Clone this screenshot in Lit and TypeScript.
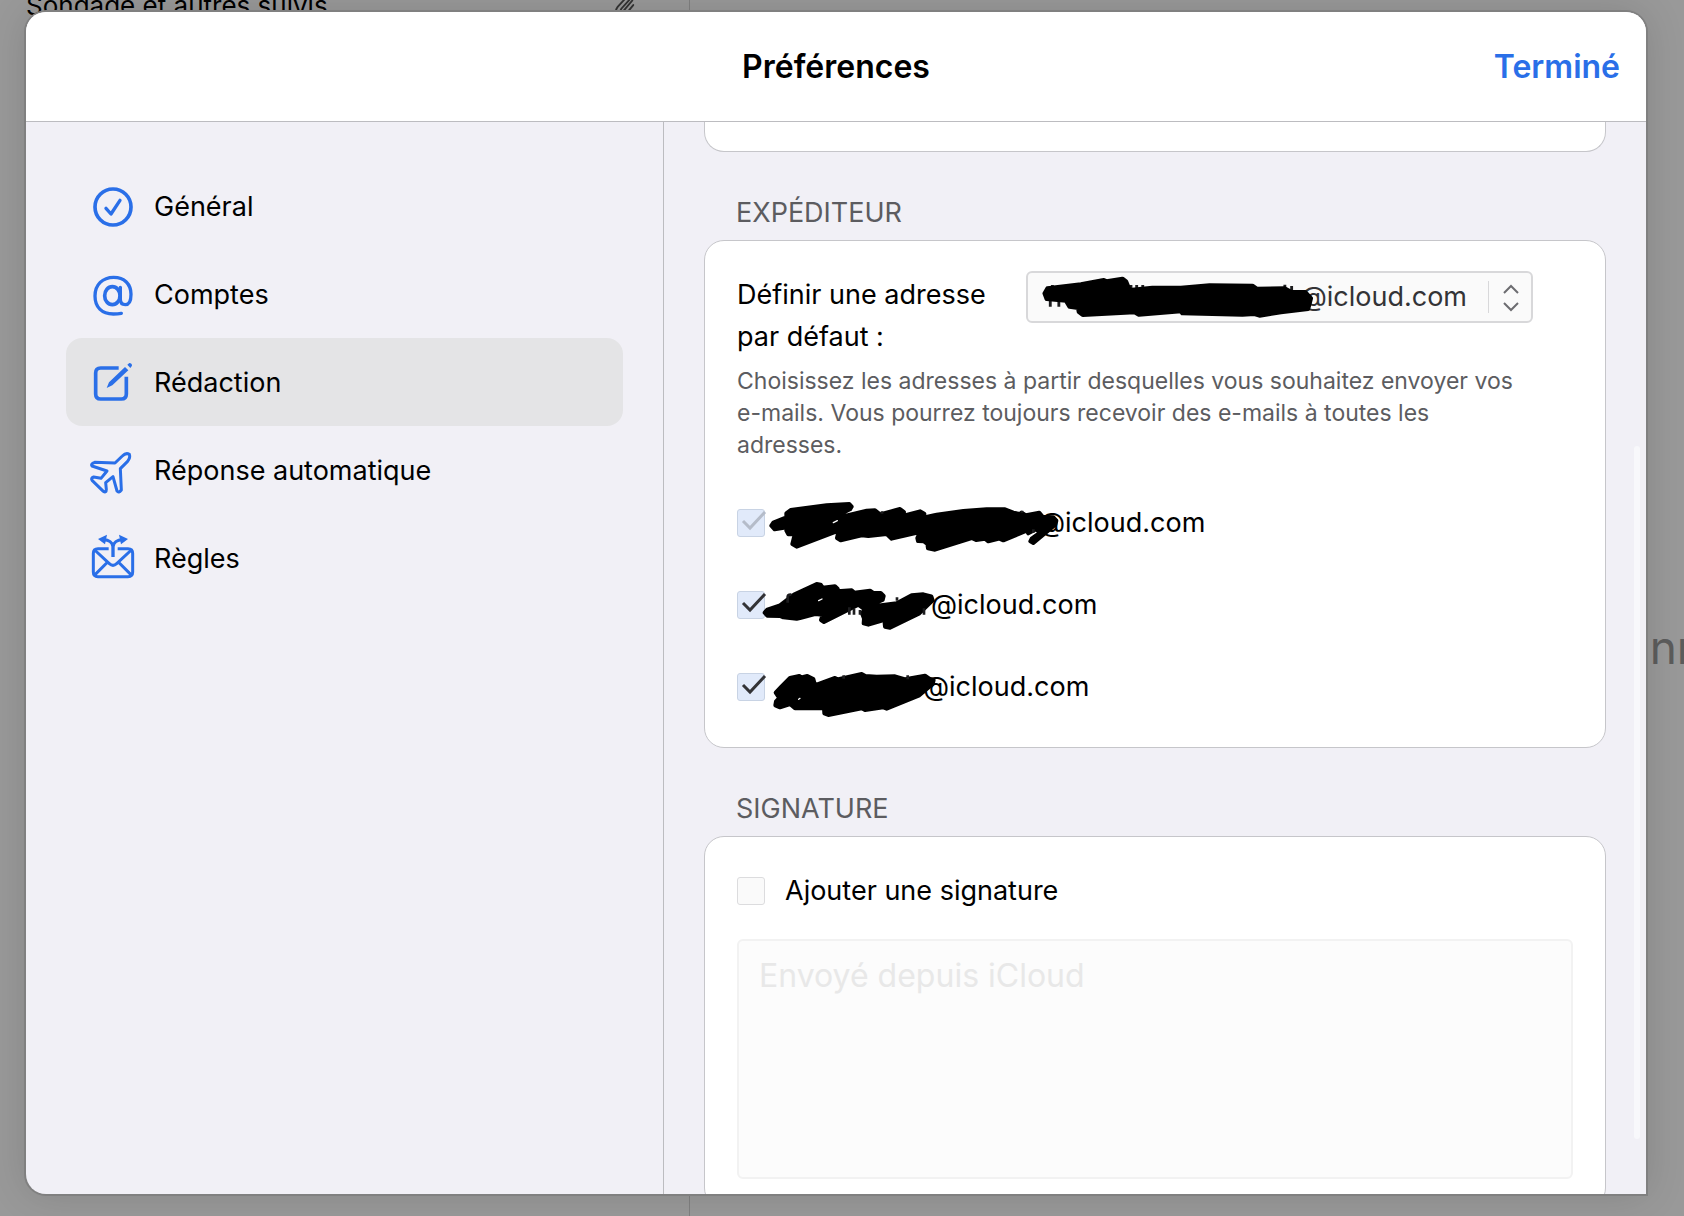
import { LitElement, html, css, svg, nothing } from "lit";
import { customElement, property, state } from "lit/decorators.js";
import { classMap } from "lit/directives/class-map.js";

type Section = { id: string; label: string; box: string; icon: unknown };

const SECTIONS: Section[] = [
  {
    id: "general",
    label: "Général",
    box: "90 72 132 132",
    icon: svg`<circle cx="159" cy="141" r="54" stroke-width="11"/>
      <path d="M138 145 L153 162 L180 121" stroke-width="10"/>`,
  },
  {
    id: "comptes",
    label: "Comptes",
    box: "90 336 132 132",
    icon: svg`<path stroke-width="10" d="M184 460 Q173 462 160 462 C125 462 105 441 105 408 C105 374 128 352 161 352 C193 352 213 372 213 403 C213 423 207 434 196 434 C186 434 181 428 181 418 L181 382"/>
      <ellipse cx="157" cy="407" rx="23" ry="27" stroke-width="11"/>`,
  },
  {
    id: "redaction",
    label: "Rédaction",
    box: "90 0 132 132",
    icon: svg`<path stroke-width="11" stroke-linecap="butt" d="M176 24 H122 Q107 24 107 39 V102 Q107 117 122 117 H184 Q199 117 199 102 V50"/>
      <path class="solid" d="M140 84 L147 67 L195 21 L205 31 L157 76 Z M202 14 L208 9 Q216 9 216 17 L211 24 Z"/>`,
  },
  {
    id: "reponse",
    label: "Réponse automatique",
    box: "90 264 132 132",
    icon: svg`<path stroke-width="9" d="M165 309 L104 307 Q91 312 96 318 L141 333 L123 355 L101 351 Q91 355 97 362 L130 394 Q139 400 139 388 L137 368 L159 350 L171 393 Q176 400 184 390 L181 326 L202 305 Q212 294 208 283 Q198 277 187 288 Z"/>`,
  },
  {
    id: "regles",
    label: "Règles",
    box: "90 528 132 132",
    icon: svg`<path stroke-width="9" stroke-linecap="butt" d="M146 566 H114 Q100 566 100 580 V636 Q100 650 114 650 H204 Q218 650 218 636 V580 Q218 566 204 566 H173"/>
      <path stroke-width="9" stroke-linecap="butt" d="M104 570 L148 611 Q159 621 170 611 L214 570 M103 646 L143 606 M215 646 L175 606"/>
      <path stroke-width="10" stroke-linecap="butt" d="M159 591 V560 C158 548 146 540 131 539 M159 560 C160 548 172 540 187 539"/>
      <path class="solid" d="M114 537 L141 524 L135 553 Z M204 537 L177 524 L183 553 Z"/>`,
  },
];

type Address = { id: string; domain: string; checked: boolean; locked: boolean; width: number; top: number; ink: unknown };

const ADDRESSES: Address[] = [
  {
    id: "adresse-1",
    domain: "@icloud.com",
    checked: true,
    locked: true,
    width: 254,
    top: 87,
    ink: svg`<path class="mass" d="M154 137 L160 128 L199 112 L199 100 L212 90 L320 76 L388 72 L395 80 L390 88 L362 102 L356 112 L440 92 L465 91 L480 103 L540 87 L552 96 L548 108 L600 94 L613 101 L612 112 L650 104 L730 93 L800 88 L855 88 L880 98 L900 102 L905 98 L918 106 L958 98 L968 110 L1000 112 L1009 122 L1006 134 L940 189 L931 184 L935 176 L960 158 L948 148 L925 160 L920 152 L850 181 L838 176 L805 184 L795 176 L768 180 L755 174 L645 209 L624 205 L622 192 L612 184 L594 183 L592 174 L600 156 L515 176 L500 162 L445 168 L425 166 L362 181 L351 174 L356 152 L230 200 L217 192 L222 172 L238 162 L205 163 L199 152 L210 140 L164 148 Z"/>
      <path class="trace" d="M486 94 V101 M906 92 V98 M940 148 V158"/>
      <path class="gap" d="M340 128 L352 122"/>`,
  },
  {
    id: "adresse-2",
    domain: "@icloud.com",
    checked: true,
    locked: false,
    width: 146,
    top: 333,
    ink: svg`<path class="mass" d="M134 398 L142 389 L180 376 L222 344 L290 312 L302 314 L308 323 L345 319 L353 326 L352 334 L395 331 L403 338 L450 332 L460 339 L482 339 L491 348 L488 360 L468 368 L466 378 L530 370 L575 346 L610 343 L634 349 L638 361 L598 400 L510 443 L495 440 L494 430 L512 414 L445 434 L431 430 L432 416 L426 400 L434 388 L415 374 L312 426 L303 420 L308 404 L285 402 L240 414 L230 416 L190 412 L180 408 L142 407 Z"/>
      <path class="trace" d="M203 368 V350 Q204 343 214 344 M388 382 V404 M402 386 V404 M420 390 V404 M531 352 V362 M612 385 V404"/>
      <path class="gap" d="M296 362 L306 357"/>`,
  },
  {
    id: "adresse-3",
    domain: "@icloud.com",
    checked: true,
    locked: false,
    width: 138,
    top: 579,
    ink: svg`<path class="mass" d="M167 638 L184 620 L210 594 L238 588 L244 592 L262 588 L280 597 L284 612 L290 614 L345 594 L352 598 L425 582 L436 588 L470 590 L525 589 L556 598 L615 587 L628 596 L641 600 L638 612 L598 646 L500 686 L490 682 L435 690 L425 685 L325 705 L313 700 L312 685 L225 685 L210 672 L180 682 L166 676 L168 664 L178 654 Z"/>
      <path class="trace" d="M371 586 V596 M563 586 V598"/>
      <path class="gap" d="M236 658 L240 655"/>`,
  },
];

@customElement("redacted-ink")
export class RedactedInk extends LitElement {
  @property() box = "0 0 100 100";
  @property({ attribute: false }) ink: unknown = nothing;

  static styles = css`
    :host {
      display: block;
      height: 100%;
      pointer-events: none;
    }
    svg {
      display: block;
      width: 100%;
      height: 100%;
      overflow: visible;
      fill: none;
      stroke-linecap: round;
      stroke-linejoin: round;
    }
    .mass {
      fill: #000;
      stroke: #000;
      stroke-width: 12;
    }
    .trace {
      stroke: #1c1c1e;
      stroke-width: 8;
      stroke-linecap: butt;
    }
    .gap {
      stroke: #fff;
      stroke-width: 4;
    }
  `;

  render() {
    return html`<svg viewBox=${this.box} preserveAspectRatio="none" aria-hidden="true">${this.ink}</svg>`;
  }
}

@customElement("check-box")
export class CheckBox extends LitElement {
  @property() label = "";
  @property({ type: Boolean }) checked = false;
  @property({ type: Boolean }) locked = false;
  @property({ attribute: false }) ink?: unknown;
  @property({ type: Number }) inkWidth = 0;
  @property({ type: Number }) inkTop = 0;

  static styles = css`
    :host {
      display: block;
    }
    .row {
      display: flex;
      align-items: center;
      gap: 20px;
      height: 28px;
      font-size: 27px;
      line-height: 28px;
      white-space: nowrap;
    }
    .tick {
      position: relative;
      flex: none;
      width: 28px;
      height: 28px;
    }
    input {
      appearance: none;
      display: block;
      box-sizing: border-box;
      width: 28px;
      height: 28px;
      margin: 0;
      border: 1px solid #dcdcde;
      border-radius: 3px;
      background: #fafafa;
    }
    input:checked {
      border-color: #c8d3e4;
      background: #e1eafa;
    }
    .mark {
      position: absolute;
      inset: 0;
      overflow: visible;
      fill: none;
      stroke: #333336;
      stroke-width: 3;
      pointer-events: none;
    }
    input:disabled + .mark {
      stroke: #b5bcc9;
    }
    .text {
      display: flex;
    }
    .ink {
      position: relative;
      z-index: 1;
      height: 28px;
    }
  `;

  private toggle(e: Event) {
    this.checked = (e.target as HTMLInputElement).checked;
  }

  render() {
    return html`<label class="row">
      <span class="tick">
        <input type="checkbox" .checked=${this.checked} ?disabled=${this.locked} @change=${this.toggle} />
        ${this.checked
          ? html`<svg class="mark" viewBox="0 0 28 28" aria-hidden="true"><path d="M6 12 L13 19 L28 3" /></svg>`
          : nothing}
      </span>
      <span class="text">
        ${this.ink
          ? html`<span class="ink" style="width:${this.inkWidth}px"
              ><redacted-ink .box=${`195 ${this.inkTop} ${this.inkWidth * 3} 84`} .ink=${this.ink}></redacted-ink
            ></span>`
          : nothing}
        <span>${this.label}</span>
      </span>
    </label>`;
  }
}

@customElement("app-root")
export class AppRoot extends LitElement {
  @state() private current = "redaction";

  static styles = css`
    :host {
      display: block;
      height: 100vh;
      font-family: Inter, "Liberation Sans", sans-serif;
      color: #000;
    }
    * {
      box-sizing: border-box;
    }
    .page {
      position: relative;
      height: 100%;
      overflow: hidden;
      padding: 12px 38px 22px 26px;
      background: #999;
    }
    .behind {
      position: absolute;
      inset: 0;
    }
    .mail-list {
      position: absolute;
      top: 0;
      bottom: 0;
      left: 0;
      width: 690px;
      border-right: 1px solid #808080;
    }
    .subject {
      position: absolute;
      top: -10px;
      left: 26px;
      font-size: 26px;
      line-height: 32px;
      white-space: nowrap;
    }
    .clip {
      position: absolute;
      top: -6px;
      left: 614px;
      width: 22px;
      height: 24px;
      fill: none;
      stroke: #333;
      stroke-width: 2;
      stroke-linecap: round;
    }
    .empty {
      position: absolute;
      top: 619px;
      right: -20px;
      color: #5c5c5c;
      font-size: 46px;
      line-height: 56px;
    }
    .dialog {
      position: relative;
      display: flex;
      flex-direction: column;
      height: 100%;
      border-radius: 20px 20px 0 20px;
      background: #f1f0f6;
      box-shadow: 0 0 0 2px #808080, 0 0 40px rgba(0, 0, 0, 0.14);
    }
    .header {
      display: grid;
      grid-template-columns: 1fr auto 1fr;
      align-items: center;
      flex: none;
      height: 110px;
      padding: 0 26px;
      border-bottom: 1px solid #bcbcc0;
      border-radius: 20px 20px 0 0;
      background: #fff;
    }
    .title {
      grid-column: 2;
      margin: 0;
      font-size: 32px;
      font-weight: 600;
      line-height: 40px;
    }
    .done {
      justify-self: end;
      padding: 0;
      border: 0;
      background: none;
      color: #2a6fe8;
      font: 600 32px/40px Inter, "Liberation Sans", sans-serif;
    }
    .body {
      display: grid;
      grid-template-columns: 638px minmax(0, 1fr);
      flex: 1;
      min-height: 0;
    }
    .sidebar {
      padding: 40px;
      border-right: 1px solid #bcbcc0;
    }
    .section {
      display: flex;
      align-items: center;
      gap: 20px;
      width: 100%;
      height: 88px;
      padding: 0 24px;
      border: 0;
      border-radius: 16px;
      background: none;
      color: #000;
      font: 27px/36px Inter, "Liberation Sans", sans-serif;
      text-align: left;
    }
    .section.current {
      background: #e4e4e6;
    }
    .name {
      padding-top: 2px;
    }
    .icon {
      flex: none;
      width: 44px;
      height: 44px;
      overflow: visible;
      fill: none;
      stroke: #2a6fe8;
      stroke-linecap: round;
      stroke-linejoin: round;
    }
    .solid {
      fill: #2a6fe8;
      stroke: none;
    }
    .pane {
      position: relative;
      overflow: hidden;
      padding: 0 40px;
    }
    .card {
      padding: 0 32px;
      border: 1px solid #c6c6ca;
      border-radius: 20px;
      background: #fff;
    }
    .card.tail {
      height: 30px;
      border-top: 0;
      border-radius: 0 0 20px 20px;
    }
    .card.sender {
      padding-top: 30px;
      padding-bottom: 46px;
    }
    .card.signature {
      padding-top: 40px;
      padding-bottom: 28px;
    }
    .heading {
      margin: 45px 32px 11px;
      color: #5c5c60;
      font-size: 27px;
      font-weight: 400;
      line-height: 32px;
    }
    .default {
      display: flex;
      align-items: flex-start;
      gap: 30px;
      padding-right: 40px;
    }
    .default label {
      flex: 1;
      padding-top: 3px;
      font-size: 27px;
      line-height: 42px;
    }
    .picker {
      position: relative;
      flex: none;
      width: 507px;
      height: 52px;
    }
    .picker select {
      appearance: none;
      display: block;
      width: 100%;
      height: 100%;
      padding: 0 64px 0 16px;
      border: 2px solid #d8d8da;
      border-radius: 6px;
      background: #fafafa;
      color: #333336;
      font: 27px/36px Inter, "Liberation Sans", sans-serif;
      text-align-last: right;
    }
    .picker redacted-ink {
      position: absolute;
      inset: 0;
    }
    .arrows {
      position: absolute;
      top: 10px;
      right: 0;
      width: 45px;
      height: 32px;
      border-left: 1px solid #d8d8da;
      fill: none;
      stroke: #6c6c70;
      stroke-width: 2;
      pointer-events: none;
    }
    .help {
      margin: 7px 40px 48px 0;
      color: #5c5c60;
      font-size: 23px;
      line-height: 32px;
    }
    .addresses {
      display: grid;
      gap: 54px;
    }
    .note {
      display: block;
      width: 100%;
      height: 240px;
      margin-top: 34px;
      padding: 13px 20px;
      border: 2px solid #f2f2f2;
      border-radius: 6px;
      background: #fcfcfc;
      font: 32px/44px Inter, "Liberation Sans", sans-serif;
      resize: none;
    }
    .note::placeholder {
      color: #e8e8e8;
      opacity: 1;
    }
    .thumb {
      position: absolute;
      top: 324px;
      right: 6px;
      bottom: 55px;
      width: 6px;
      border-radius: 3px;
      background: #f8f8fb;
    }
  `;

  private pickerInk = svg`<path class="trace" d="M114 145 V170 M138 150 V170 M120 105 V112 M340 105 V118 M356 105 V116 M373 105 V114 M771 104 V118 M790 108 V120"/>
    <path class="mass" d="M98 130 L106 115 L200 103 L264 90 L272 94 L316 86 L326 94 L336 120 L400 113 L480 113 L560 106 L680 107 L692 116 L770 115 L788 125 L828 126 L844 145 L836 177 L760 187 L700 197 L686 192 L652 194 L484 190 L480 184 L362 194 L350 187 L205 195 L194 186 L192 174 L168 170 L158 152 L104 147 Z"/>`;

  render() {
    return html`<div class="page">
      <div class="behind">
        <div class="mail-list">
          <span class="subject">Sondage et autres suivis</span>
          <svg class="clip" viewBox="0 0 24 24" aria-hidden="true">
            <path d="M14 2 L4 13 Q1 17 3 20 Q6 22 9 19 L20 6 M17 5 L8 15 Q6 18 8 18 M21 11 L12 22" />
          </svg>
        </div>
        <span class="empty">onn</span>
      </div>
      <div class="dialog" role="dialog" aria-labelledby="title">
        <header class="header">
          <h1 class="title" id="title">Préférences</h1>
          <button class="done">Terminé</button>
        </header>
        <div class="body">
          <nav class="sidebar">
            ${SECTIONS.map(
              (s) => html`<button
                class=${classMap({ section: true, current: s.id === this.current })}
                @click=${() => (this.current = s.id)}
              >
                <svg class="icon" viewBox=${s.box} aria-hidden="true">${s.icon}</svg>
                <span class="name">${s.label}</span>
              </button>`
            )}
          </nav>
          <main class="pane">
            <div class="card tail"></div>
            <h2 class="heading">EXPÉDITEUR</h2>
            <section class="card sender">
              <div class="default">
                <label for="adresse">Définir une adresse par défaut :</label>
                <div class="picker">
                  <select id="adresse">
                    <option>@icloud.com</option>
                  </select>
                  <redacted-ink box="46 63 1420 156" .ink=${this.pickerInk}></redacted-ink>
                  <svg class="arrows" viewBox="0 0 44 32" aria-hidden="true">
                    <path d="M15 12 L22 5 L29 12 M15 22 L22 29 L29 22" />
                  </svg>
                </div>
              </div>
              <p class="help">
                Choisissez les adresses à partir desquelles vous souhaitez envoyer vos e-mails. Vous pourrez toujours
                recevoir des e-mails à toutes les adresses.
              </p>
              <div class="addresses">
                ${ADDRESSES.map(
                  (a) => html`<check-box
                    .label=${a.domain}
                    .checked=${a.checked}
                    .locked=${a.locked}
                    .ink=${a.ink}
                    .inkWidth=${a.width}
                    .inkTop=${a.top}
                  ></check-box>`
                )}
              </div>
            </section>
            <h2 class="heading">SIGNATURE</h2>
            <section class="card signature">
              <check-box label="Ajouter une signature"></check-box>
              <textarea class="note" aria-label="Signature" placeholder="Envoyé depuis iCloud" disabled></textarea>
            </section>
            <div class="thumb"></div>
          </main>
        </div>
      </div>
    </div>`;
  }
}
